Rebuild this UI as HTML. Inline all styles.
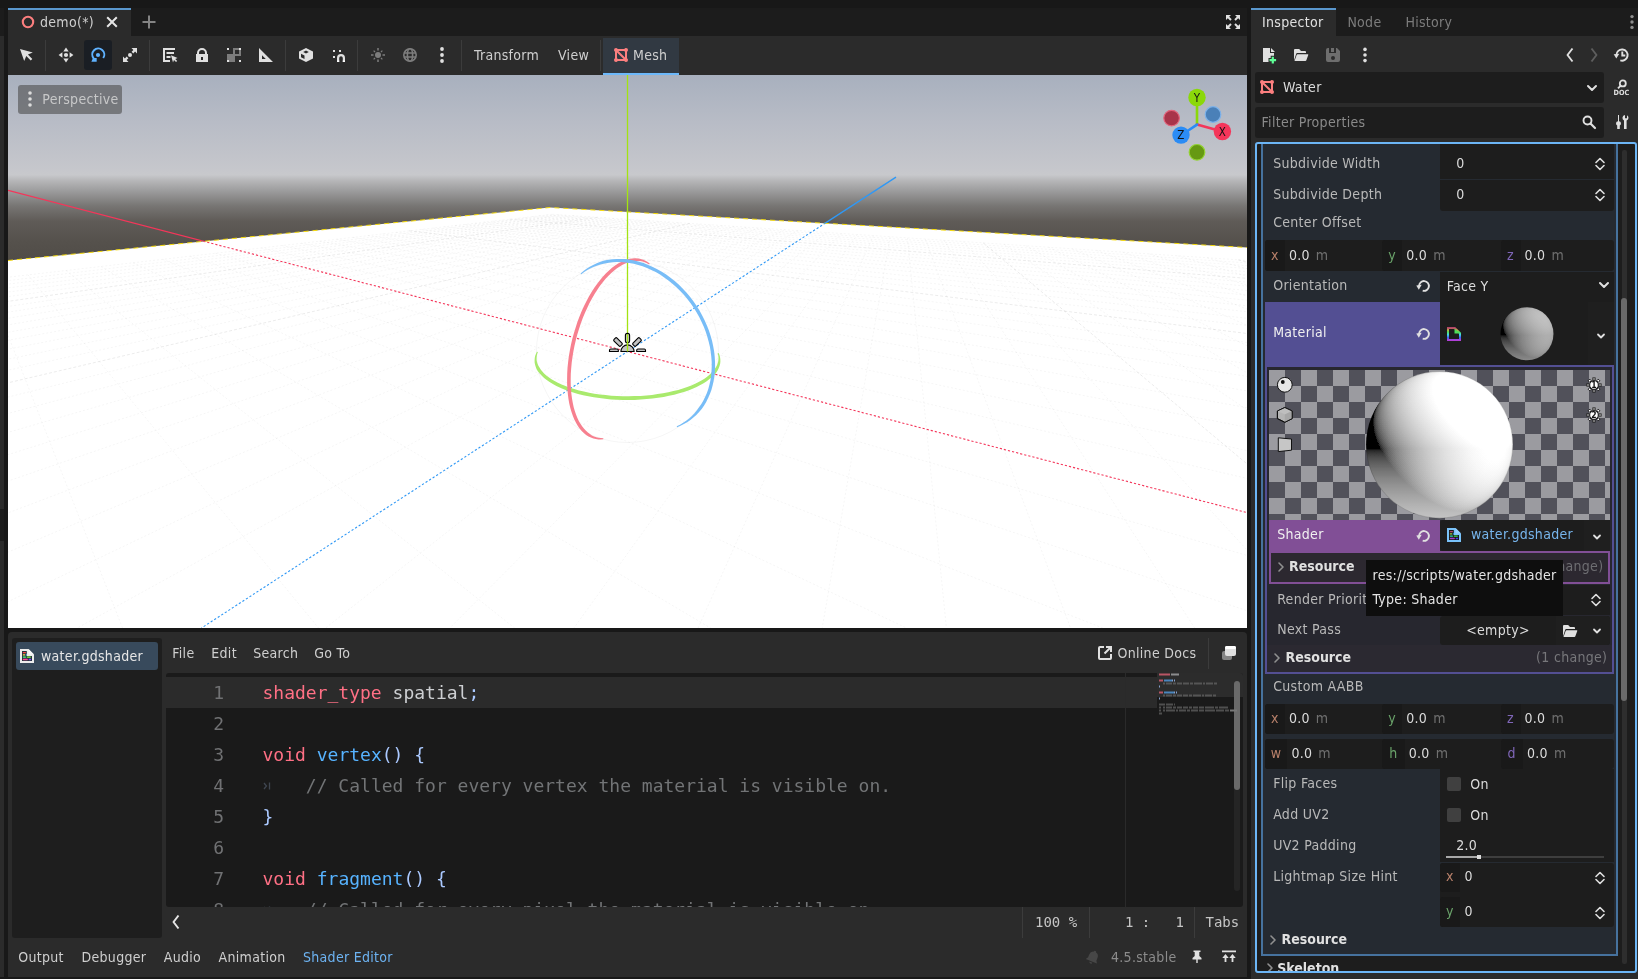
<!DOCTYPE html>
<html lang="en">
<head>
<meta charset="utf-8">
<title>Godot Editor - demo</title>
<style>
*{box-sizing:border-box;margin:0;padding:0}
html,body{width:1638px;height:979px;overflow:hidden;background:#181818}
body{position:relative;font-family:"DejaVu Sans Condensed","DejaVu Sans","Liberation Sans",sans-serif;font-size:14px;letter-spacing:.3px;color:#cdcdcd;line-height:16px}
.a{position:absolute}
.t{position:absolute;white-space:pre;line-height:16px;height:16px}
.mono{font-family:"DejaVu Sans Mono","Liberation Mono",monospace;letter-spacing:0}
svg{position:absolute;overflow:visible}
svg text{font-family:"DejaVu Sans Condensed","DejaVu Sans","Liberation Sans",sans-serif}
.sep{position:absolute;width:1px;background:#3c3c3c}
.fld{position:absolute;background:#1d1d1d}
.b{font-weight:bold;letter-spacing:0}
.ln{color:#707173;text-align:right;font-size:18px;line-height:24px;height:24px}
.cd{color:#cdcfd2;font-size:18px;line-height:24px;height:24px}
.k{color:#ff7085}.f{color:#57b3ff}.s{color:#abc9ff}.c{color:#727476}
.st{font-size:14px;color:#c6c6c6}
.lb{color:#b9b9b9}.vl{color:#dcdcdc}.un{color:#707070}
.cx{color:#b8806a}.cy{color:#6aa36a}.cz{color:#7f66b8}
.ax{position:absolute;background:#191919;border-radius:3px 0 0 3px}
.w{color:#cfcfcf}
</style>
</head>
<body>
<svg width="0" height="0" style="left:0;top:0"><defs>
<symbol id="i-rev" viewBox="0 0 16 16"><path d="M6.700 12.700A4.900 4.900 0 1 0 3.100 8" fill="none" stroke="#e0e0e0" stroke-width="1.900"/><path d="M.3 7.400l5.400-.6-2.900 4.900z" fill="#e0e0e0"/></symbol>
<symbol id="i-ud" viewBox="0 0 16 16"><path d="M4 6.500l4-4 4 4M4 9.500l4 4 4-4" fill="none" stroke="#e0e0e0" stroke-width="1.600" stroke-linecap="round" stroke-linejoin="round"/></symbol>
<symbol id="i-ch" viewBox="0 0 16 16"><path d="M4 6l4 4 4-4" fill="none" stroke="#e0e0e0" stroke-width="2" stroke-linecap="round" stroke-linejoin="round"/></symbol>
<symbol id="i-chs" viewBox="0 0 16 16"><path d="M5 6.500l3 3 3-3" fill="none" stroke="#e0e0e0" stroke-width="1.800" stroke-linecap="round" stroke-linejoin="round"/></symbol>
<symbol id="i-gt" viewBox="0 0 16 16"><path d="M6 4l4 4-4 4" fill="none" stroke="#909090" stroke-width="1.600" stroke-linecap="round" stroke-linejoin="round"/></symbol>
<symbol id="i-mesh" viewBox="0 0 16 16"><path d="M3 1a2 2 0 0 0-2 2 2 2 0 0 0 1 1.730V11.270a2 2 0 0 0-1 1.730 2 2 0 0 0 2 2 2 2 0 0 0 1.730-1h6.540a2 2 0 0 0 1.730 1 2 2 0 0 0 2-2 2 2 0 0 0-1-1.730V4.730A2 2 0 0 0 15 3a2 2 0 0 0-2-2 2 2 0 0 0-1.730 1H4.730A2 2 0 0 0 3 1zm2.414 3H11.270a2 2 0 0 0 .73.730v5.856zM4 5.414 10.586 12H4.730a2 2 0 0 0-.73-.730z" fill="#fc7f7f"/></symbol>
<symbol id="i-folder" viewBox="0 0 16 16"><path d="M2 2a1 1 0 0 0-1 1v10.500L3.300 6.600A1 1 0 0 1 4.250 6H13V5a1 1 0 0 0-1-1H8L6.700 2.400A1 1 0 0 0 6 2z" fill="#e0e0e0"/><path d="M4.600 7.200a1 1 0 0 0-.95.700L1.500 14h10.900a1 1 0 0 0 .95-.700l1.900-5.400a.5.500 0 0 0-.470-.700z" fill="#e0e0e0"/></symbol>
<symbol id="i-shader" viewBox="0 0 16 16"><path d="M1 1h8.500L15 6.500V15H1z" fill="#ececec"/><path d="M9.500 1v5.500H15z" fill="#f8f8f8"/><path d="M3 3h4.800v5h5.200v5H3z" fill="#26333f"/><g stroke-width="1.300" stroke-linecap="round" fill="none"><path d="M4.400 4.700h2" stroke="#ff4545"/><path d="M4.400 6.900h1.200" stroke="#ffe345"/><path d="M7.300 6.900h.1" stroke="#45d7ff"/><path d="M4.400 9.100h2" stroke="#45ff8a"/><path d="M8.300 9.100h3" stroke="#80ff45"/><path d="M4.400 11.500h3.800" stroke="#ff4596"/><path d="M10.300 11.500h1.200" stroke="#8045ff"/></g></symbol><symbol id="i-shaderb" viewBox="0 0 16 16"><path d="M1 1h8.500L15 6.500V15H1z" fill="#79c2fa"/><path d="M9.500 1v5.500H15z" fill="#96d0ff"/><path d="M3 3h4.800v5h5.200v5H3z" fill="#1a1a1a"/><g stroke-width="1.300" stroke-linecap="round" fill="none"><path d="M4.400 4.700h2" stroke="#b04a68"/><path d="M4.400 6.900h1.200" stroke="#a8d040"/><path d="M7.300 6.900h.1" stroke="#30b8f0"/><path d="M4.400 9.100h2" stroke="#30d8b0"/><path d="M8.300 9.100h3" stroke="#40e050"/><path d="M4.400 11.500h3.800" stroke="#a040c8"/><path d="M10.300 11.500h1.200" stroke="#4040f0"/></g></symbol>
<symbol id="i-dots" viewBox="0 0 16 16"><circle cx="8" cy="2" r="1.900"/><circle cx="8" cy="8" r="1.900"/><circle cx="8" cy="14" r="1.900"/></symbol>
<linearGradient id="gx" gradientUnits="userSpaceOnUse" x1="-51.900" y1="51.900" x2="51.900" y2="-51.900"><stop offset="0" stop-color="rgb(25,0,0)"/><stop offset="1" stop-color="rgb(230,0,0)"/></linearGradient>
<radialGradient id="gz" gradientUnits="userSpaceOnUse" cx="0" cy="0" r="73.400"><stop offset="0" stop-color="rgb(0,255,0)"/><stop offset=".2" stop-color="rgb(0,252,0)"/><stop offset=".4" stop-color="rgb(0,242,0)"/><stop offset=".5" stop-color="rgb(0,234,0)"/><stop offset=".6" stop-color="rgb(0,223,0)"/><stop offset=".7" stop-color="rgb(0,209,0)"/><stop offset=".8" stop-color="rgb(0,188,0)"/><stop offset=".85" stop-color="rgb(0,175,0)"/><stop offset=".9" stop-color="rgb(0,158,0)"/><stop offset=".94" stop-color="rgb(0,139,0)"/><stop offset=".97" stop-color="rgb(0,119,0)"/><stop offset=".99" stop-color="rgb(0,96,0)"/><stop offset="1" stop-color="rgb(0,64,0)"/></radialGradient>
<linearGradient id="gy" gradientUnits="userSpaceOnUse" x1="0" y1="4" x2="0" y2="73.400"><stop offset="0" stop-color="rgb(0,0,0)"/><stop offset="1" stop-color="rgb(0,0,205)"/></linearGradient>
<filter id="lit" color-interpolation-filters="sRGB" x="-10%" y="-10%" width="120%" height="120%"><feColorMatrix type="matrix" values="2.252 .750 0 0 -1.126  0 0 0 0 0  0 0 .7 0 0  0 0 0 1 0"/><feColorMatrix type="matrix" values="1 0 1 0 0  1 0 1 0 0  1 0 1 0 0  0 0 0 1 0"/><feComponentTransfer><feFuncR type="gamma" exponent=".4545"/><feFuncG type="gamma" exponent=".4545"/><feFuncB type="gamma" exponent=".4545"/></feComponentTransfer></filter>
<filter id="lit2" color-interpolation-filters="sRGB" x="-10%" y="-10%" width="120%" height="120%"><feColorMatrix type="matrix" values=".953 .317 0 0 -.476  0 0 0 0 0  0 0 .32 0 0  0 0 0 1 0"/><feColorMatrix type="matrix" values="1 0 1 0 0  1 0 1 0 0  1 0 1 0 0  0 0 0 1 0"/><feComponentTransfer><feFuncR type="gamma" exponent=".4545"/><feFuncG type="gamma" exponent=".4545"/><feFuncB type="gamma" exponent=".4545"/></feComponentTransfer></filter>
<clipPath id="sc"><circle r="73.400"/></clipPath>
<g id="sphg"><rect x="-75" y="-75" width="150" height="150" fill="url(#gx)"/><rect x="-75" y="-75" width="150" height="150" fill="url(#gz)" style="mix-blend-mode:screen"/><rect x="-75" y="-75" width="150" height="150" fill="url(#gy)" style="mix-blend-mode:screen"/></g>
</defs></svg>
<div class="a" style="left:0px;top:8px;width:4px;height:28px;background:#1c1c1c;"></div>
<div class="a" style="left:0px;top:36px;width:4px;height:941px;background:#2b2b2b;"></div>
<div class="a" style="left:0px;top:509px;width:4px;height:32px;background:#1c1c1c;"></div>
<div class="a" style="left:8px;top:8px;width:1239px;height:620px;background:#2b2b2b;"></div>
<div class="a" style="left:8px;top:8px;width:1239px;height:28px;background:#1c1c1c;"></div>
<div class="a" style="left:8px;top:8px;width:123px;height:28px;background:#2b2b2b;border-top:2px solid #5a97cd"></div>
<svg style="left:20px;top:14px" width="16" height="16" viewBox="0 0 16 16"><circle cx="8" cy="8" r="5.200" fill="none" stroke="#fc7f7f" stroke-width="2.100"/></svg>
<div class="t w" style="left:40px;top:13.8px;">demo(*)</div>
<svg style="left:104px;top:14px" width="16" height="16" viewBox="0 0 16 16"><path d="M3.200 3.200l9.600 9.600M12.800 3.200l-9.600 9.600" stroke="#e6e6e6" stroke-width="2" fill="none"/></svg>
<svg style="left:141px;top:14px" width="16" height="16" viewBox="0 0 16 16"><path d="M8 1.500v13M1.500 8h13" stroke="#848484" stroke-width="2" fill="none"/></svg>
<svg style="left:1225px;top:14px" width="16" height="16" viewBox="0 0 16 16"><path d="M1 1v5l1.800-1.800L5.300 6.700 6.700 5.300 4.200 2.800 6 1zM15 1h-5l1.800 1.800-2.500 2.500 1.400 1.400 2.500-2.500L15 6zM1 15h5l-1.800-1.800 2.500-2.500-1.400-1.400-2.500 2.500L1 10zM15 15v-5l-1.800 1.800-2.500-2.500-1.400 1.400 2.500 2.500L10 15z" fill="#e0e0e0"/></svg>
<div class="a" style="left:84px;top:40px;width:28px;height:30px;background:#1a1e24;border-radius:3px"></div>
<div class="sep" style="left:45px;top:40px;height:31px"></div>
<div class="sep" style="left:149px;top:40px;height:31px"></div>
<div class="sep" style="left:285px;top:40px;height:31px"></div>
<div class="sep" style="left:357px;top:40px;height:31px"></div>
<div class="sep" style="left:461px;top:40px;height:31px"></div>
<div class="sep" style="left:600px;top:40px;height:31px"></div>
<svg style="left:18px;top:47px" width="16" height="16" viewBox="0 0 16 16"><path d="M2 2l4.200 12 2.100-4.900 4.400 4.400 1.600-1.600-4.400-4.400L14.800 5.400z" fill="#e0e0e0"/></svg>
<svg style="left:58px;top:47px" width="16" height="16" viewBox="0 0 16 16"><path d="M8 .6 5.300 4.400h5.400zM8 15.400 5.300 11.600h5.400zM.6 8 4.400 5.300v5.400zM15.400 8 11.600 5.300v5.400z" fill="#e0e0e0"/><circle cx="8" cy="8" r="2.100" fill="#e0e0e0"/></svg>
<svg style="left:90px;top:47px" width="16" height="16" viewBox="0 0 16 16"><path d="M3.700 11.400A6 6 0 1 1 13.200 11" fill="none" stroke="#5fb2ff" stroke-width="2"/><path d="M1.400 14.800 3 11h3.700v3.800z" fill="#5fb2ff"/><circle cx="8" cy="8" r="2.100" fill="#5fb2ff"/></svg>
<svg style="left:122px;top:47px" width="16" height="16" viewBox="0 0 16 16"><path d="M9.500 1H15v5.500l-1.900-1.900-1.800 1.800-1.700-1.700 1.800-1.800zM6.500 15H1V9.500l1.900 1.900 1.800-1.800 1.700 1.700-1.800 1.800z" fill="#e0e0e0"/><circle cx="8" cy="8" r="2" fill="#e0e0e0"/></svg>
<svg style="left:162px;top:47px" width="16" height="16" viewBox="0 0 16 16"><path d="M1 1h12v2H3v10h5v2H1zM4.500 5h7.500v2H4.500zM4.500 9h4v2H4.500z" fill="#e0e0e0"/><path d="M9 8.300l6.600 2.600-2.400 1 2 2-1.200 1.200-2-2-1 2.400z" fill="#e0e0e0"/></svg>
<svg style="left:194px;top:47px" width="16" height="16" viewBox="0 0 16 16"><path d="M8 1a5 5 0 0 0-5 5v1H2v8h12V7h-1V6a5 5 0 0 0-5-5zm0 2a3 3 0 0 1 3 3v1H5V6a3 3 0 0 1 3-3zM7 10h2v3H7z" fill="#e0e0e0"/></svg>
<svg style="left:226px;top:47px" width="16" height="16" viewBox="0 0 16 16"><path d="M7 1v6H1v8h8V9h6V1zm2 2h4v4H9z" fill="#e0e0e0" fill-opacity=".45"/><path d="M1 1v2h2V1zm12 0v2h2V1zM1 13v2h2v-2zm12 0v2h2v-2z" fill="#e0e0e0"/></svg>
<svg style="left:258px;top:47px" width="16" height="16" viewBox="0 0 16 16"><path d="M1 1v14h14zm3 7.200L7.800 12H4z" fill="#e0e0e0" fill-rule="evenodd"/></svg>
<svg style="left:298px;top:47px" width="16" height="16" viewBox="0 0 16 16"><path d="M8 .9 1 4.400v7.200L8 15.100l7-3.500V4.400zm0 2.700L10.800 5 8 6.400 5.200 5zM3 6.700l3.500 1.750v3.500L3 10.200z" fill="#e0e0e0" fill-rule="evenodd"/></svg>
<svg style="left:330px;top:47px" width="16" height="16" viewBox="0 0 16 16"><path d="M3 3v2h2V3zm6 0v2h2V3zM3 9v2h2V9z" fill="#e0e0e0"/><path d="M7 15v-4a4 4 0 0 1 8 0v4h-2.200v-4a1.800 1.800 0 0 0-3.600 0v4z" fill="#e0e0e0"/><path d="M7 13.500h2.200V15H7zm5.800 0H15V15h-2.200z" fill="#fff"/></svg>
<svg style="left:370px;top:47px" width="16" height="16" viewBox="0 0 16 16"><g fill="#7d7d7d"><circle cx="8" cy="8" r="3"/><path d="M7.250 1h1.500v2.500h-1.500zm0 11.500h1.500V15h-1.500zM1 7.250h2.500v1.500H1zm11.500 0H15v1.500h-2.500z"/><g transform="rotate(45 8 8)"><path d="M7.400 1.800h1.200v2h-1.200zm0 10.400h1.200v2h-1.200zM1.800 7.400h2v1.200h-2zm10.400 0h2v1.200h-2z"/></g></g></svg>
<svg style="left:402px;top:47px" width="16" height="16" viewBox="0 0 16 16"><g fill="none" stroke="#7d7d7d" stroke-width="1.600"><circle cx="8" cy="8" r="6.200"/><ellipse cx="8" cy="8" rx="2.600" ry="6.200"/><path d="M2 6h12M2 10h12"/></g></svg>
<svg style="left:434px;top:47px" width="16" height="16" viewBox="0 0 16 16"><use href="#i-dots" fill="#e0e0e0"/></svg>
<div class="t w" style="left:474px;top:47px;">Transform</div>
<div class="t w" style="left:558px;top:47px;">View</div>
<div class="a" style="left:603px;top:38px;width:76px;height:37px;background:#313942;border-bottom:2px solid #6cb8fa"></div>
<svg style="left:613px;top:47px" width="16" height="16" viewBox="0 0 16 16"><use href="#i-mesh"/></svg>
<div class="t w" style="left:633px;top:47px;">Mesh</div>
<svg style="left:8px;top:75px" width="1239" height="553" viewBox="8 75 1239 553">
<defs><linearGradient id="sky" gradientUnits="userSpaceOnUse" x1="0" y1="75" x2="0" y2="265"><stop offset="0" stop-color="#a8b0be"/><stop offset=".25" stop-color="#b8bcc6"/><stop offset=".5" stop-color="#c6c7cc"/><stop offset=".525" stop-color="#c8c9cc"/><stop offset=".56" stop-color="#b4b4b6"/><stop offset=".61" stop-color="#9c9c9d"/><stop offset=".69" stop-color="#777573"/><stop offset=".77" stop-color="#5f5b57"/><stop offset=".88" stop-color="#55514c"/><stop offset="1" stop-color="#4f4b46"/></linearGradient><clipPath id="pl"><path d="M8 260.500 550 207.500 1247 247.500V628H8z"/></clipPath><clipPath id="sk"><path d="M8 75H1247V247.500L550 207.500 8 260.500z"/></clipPath></defs>
<rect x="8" y="75" width="1239" height="200" fill="url(#sky)"/>
<path d="M8 260.500 550 207.500 1247 247.500V628H8z" fill="#fff"/>
<g clip-path="url(#pl)" fill="none"><path d="M552.4 214.3L-5612.4 926.7M552.4 214.3L1461.3 274.6M559.4 214.8L-7137.6 1133.3M545.9 215L1488 279.4M566.7 215.2L-9816.8 1496.1M539.2 215.8L1517.3 284.7M574.1 215.7L-10681.8 1652.7M532.2 216.6L1549.8 290.5M581.7 216.2L-10277.3 1652.8M525 217.5L1585.8 297M589.5 216.8L-9872.8 1652.8M517.5 218.3L1626 304.2M605.7 217.8L-9063.8 1652.8M501.5 220.2L1722.7 321.6M614.1 218.4L-8659.3 1652.8M492.9 221.2L1781.3 332.1M622.7 219L-8254.8 1652.8M484.1 222.2L1849 344.3M631.5 219.5L-7850.3 1652.9M474.8 223.3L1927.9 358.4M640.6 220.2L-7445.7 1652.9M465.1 224.4L2021.2 375.2M649.9 220.8L-7041.2 1652.9M454.9 225.6L2133.2 395.3M659.4 221.4L-6636.7 1652.9M444.3 226.8L2269.9 419.9M669.3 222.1L-6232.2 1652.9M433.1 228.1L2440.9 450.6M679.3 222.7L-5827.7 1652.9M421.4 229.4L2660.6 490M700.4 224.1L-5018.7 1653M396.1 232.3L3363.3 616.3M711.4 224.9L-4614.2 1653M382.5 233.9L3977.7 726.6M722.7 225.6L-4209.7 1653M368 235.6L5000.5 910.3M734.4 226.4L-3805.2 1653M352.8 237.4L7042 1277M746.4 227.2L-3400.7 1653M336.6 239.2L8826.5 1653.5M758.7 228L-2996.2 1653.1M319.5 241.2L8187.8 1653.5M771.5 228.8L-2591.7 1653.1M301.3 243.3L7549.2 1653.5M784.7 229.7L-2187.2 1653.1M281.9 245.5L6910.5 1653.5M798.3 230.6L-1782.7 1653.1M261.2 247.9L6271.8 1653.4M826.8 232.5L-973.7 1653.1M215.4 253.2L4994.4 1653.4M841.9 233.5L-569.2 1653.2M190 256.2L4355.7 1653.4M857.4 234.5L-164.7 1653.2M162.6 259.3L3717 1653.3M873.5 235.6L239.8 1653.2M133 262.8L3078.3 1653.3M890.1 236.7L644.3 1653.2M100.9 266.5L2439.6 1653.3M907.4 237.9L1048.8 1653.2M66 270.5L1800.9 1653.3M925.3 239.1L1453.3 1653.2M28 274.9L1162.2 1653.2M943.9 240.3L1857.8 1653.3M-13.7 279.7L523.5 1653.2M963.2 241.6L2262.3 1653.3M-59.6 285L-115.2 1653.2M1004.1 244.3L3071.3 1653.3M-166.7 297.4L-1392.6 1653.1M1025.8 245.7L3475.8 1653.3M-229.7 304.7L-2031.3 1653.1M1048.5 247.2L3880.3 1653.3M-300.6 312.9L-2670 1653.1M1072.1 248.8L4284.8 1653.4M-381.1 322.2L-3308.7 1653M1096.7 250.4L4689.3 1653.4M-473 332.8L-3947.4 1653M1122.5 252.1L5093.8 1653.4M-579.2 345.1L-4586.1 1653M1149.4 253.9L5498.3 1653.4M-703.2 359.4L-5224.8 1653M1177.6 255.8L5902.8 1653.4M-849.8 376.3L-5863.5 1652.9M1207.1 257.8L6307.3 1653.4M-1025.9 396.7L-6502.1 1652.9M1270.6 262L7116.3 1653.5M-1511.2 452.8L-7779.5 1652.9M1304.8 264.2L7520.8 1653.5M-1858.8 492.9L-8418.2 1652.8M1340.8 266.6L7925.3 1653.5M-2323.3 546.6L-9056.9 1652.8M1378.8 269.2L8329.8 1653.5M-2975.9 622L-9695.6 1652.8M1418.9 271.8L8734.3 1653.5M-3959.6 735.7L-10334.3 1652.8M1461.3 274.6L9138.8 1653.6M-5612.4 926.7L-10973 1652.7" stroke="#000" stroke-opacity=".04" stroke-width="1" stroke-dasharray="2 2"/>
<path d="M597.5 217.3L-9468.3 1652.8M509.6 219.2L1671.3 312.4M689.7 223.4L-5423.2 1653M409.1 230.8L2953.5 542.6M983.2 242.9L2666.8 1653.3M-110.3 290.9L-753.9 1653.2M1238.1 259.8L6711.8 1653.5M-1241.4 421.6L-7140.8 1652.9" stroke="#000" stroke-opacity=".08" stroke-width="1" stroke-dasharray="3 2"/></g>
<path d="M8 260.500 550 207.500 1247 247.500" fill="none" stroke="#f7dc0c" stroke-width="1" stroke-dasharray="5 4"/>
<path d="M8 190.4L1247 512.6" fill="none" stroke="#f4365a" stroke-width="1.4000000000000001" clip-path="url(#sk)"/>
<path d="M8 190.4L1247 512.6" fill="none" stroke="#f4365a" stroke-width="1.1" stroke-dasharray="2.200 2" clip-path="url(#pl)"/>
<path d="M896 177.2L201.5 628" fill="none" stroke="#2f98f5" stroke-width="1.4000000000000001" clip-path="url(#sk)"/>
<path d="M896 177.2L201.5 628" fill="none" stroke="#2f98f5" stroke-width="1.1" stroke-dasharray="2.200 2" clip-path="url(#pl)"/>
<path d="M627.500 75V351.500" stroke="#a3e312" stroke-width="1.300" fill="none"/>
<circle cx="627.500" cy="351.500" r="91" fill="none" stroke="#000" stroke-opacity=".04" stroke-width="1"/>
<path d="M536.9 351.7L536 353.7L535.2 355.7L534.8 357.8L534.6 360L534.6 362.2L535 364.5L535.7 366.8L536.6 369.2L538 371.4L539.8 373.6L541.8 375.8L544.1 378L546.7 380L549.6 382.1L552.9 384L556.4 385.9L560.2 387.7L564.3 389.4L568.6 391L573.2 392.5L578 393.9L583.1 395.2L588.4 396.3L593.8 397.3L599.4 398.1L605.1 398.8L611 399.4L616.9 399.7L622.9 399.9L628.9 400L634.8 399.9L640.8 399.6L646.7 399.1L652.5 398.5L658.1 397.8L663.7 396.9L669 395.8L674.2 394.7L679.2 393.3L683.9 391.9L688.4 390.4L692.6 388.7L696.6 386.9L700.3 385.1L703.6 383.2L706.7 381.2L709.5 379.1L712 377L714.2 374.9L716.1 372.7L717.6 370.4L718.8 368.1L719.6 365.8L720.2 363.5L720.4 361.3L720.3 359.1L720 356.9L719.4 354.8L718.6 352.9L717.6 353.2L718.2 355.2L718.5 357.2L718.5 359.1L718.3 361L717.8 363L717.1 364.9L716.2 366.8L714.9 368.7L713.5 370.6L711.8 372.6L709.8 374.5L707.4 376.5L704.8 378.4L701.9 380.2L698.6 382L695.1 383.8L691.3 385.4L687.2 387L682.8 388.5L678.2 389.9L673.4 391.1L668.3 392.3L663 393.3L657.6 394.1L652 394.9L646.4 395.4L640.6 395.9L634.7 396.1L628.8 396.3L622.9 396.2L617.1 396L611.3 395.7L605.5 395.1L599.9 394.5L594.4 393.7L589.1 392.7L583.9 391.6L579 390.4L574.2 389.1L569.8 387.7L565.5 386.1L561.6 384.5L557.9 382.8L554.6 381L551.5 379.2L548.7 377.3L546.3 375.4L544.1 373.4L542.3 371.5L540.7 369.5L539.5 367.6L538.4 365.7L537.5 363.8L537 361.9L536.6 359.9L536.6 358L536.8 356L537.2 354.1L537.9 352.1z" fill="#a9ea6d"/>
<path d="M649.7 263.5L647.6 262.1L645.5 260.8L643.2 259.8L640.7 259.1L638.2 258.6L635.5 258.3L632.8 258.4L629.9 258.7L627 259.5L624.1 260.5L621.1 261.9L618.1 263.6L615.1 265.5L612 267.8L609 270.4L606 273.3L603 276.5L600.1 280L597.2 283.7L594.3 287.8L591.6 292.1L588.9 296.6L586.3 301.4L583.9 306.3L581.5 311.5L579.4 316.8L577.3 322.3L575.5 327.9L573.8 333.5L572.2 339.3L570.9 345L569.8 350.8L568.8 356.6L568.1 362.3L567.5 368L567.2 373.6L567.1 379L567.1 384.3L567.4 389.5L567.9 394.4L568.5 399.2L569.3 403.7L570.3 408.1L571.5 412.1L572.9 415.9L574.3 419.5L576 422.8L577.7 425.8L579.6 428.5L581.7 431L583.8 433.1L586.1 434.9L588.5 436.4L590.9 437.6L593.4 438.4L595.8 439L598.3 439.4L600.8 439.4L603.3 439.2L603.3 438.2L600.9 438.1L598.5 437.8L596.3 437.3L594.1 436.5L591.9 435.4L589.9 434.1L587.9 432.6L586 430.8L584.1 428.8L582.3 426.6L580.6 424L578.9 421.2L577.4 418.1L576.1 414.7L574.8 411.1L573.7 407.2L572.8 403L572 398.6L571.4 394L571 389.2L570.7 384.2L570.7 379L570.8 373.7L571.2 368.3L571.7 362.7L572.5 357.1L573.4 351.5L574.5 345.8L575.8 340.2L577.3 334.5L579 329L580.8 323.5L582.8 318.1L584.9 312.9L587.2 307.9L589.5 303L592 298.4L594.6 293.9L597.3 289.8L600 285.8L602.8 282.2L605.6 278.8L608.5 275.7L611.3 273L614.2 270.5L617 268.3L619.8 266.4L622.6 264.8L625.3 263.6L628 262.6L630.6 261.8L633.1 261.3L635.6 261L638 260.9L640.3 261.1L642.6 261.6L644.8 262.3L647 263.2L649.1 264.4z" fill="#f7808f"/>
<path d="M677.1 427.3L680.5 425.8L683.9 424.1L687.2 422.2L690.4 420L693.4 417.6L696.3 415L699.1 412.1L701.7 409L704.1 405.6L706.2 401.9L708.1 398.1L709.9 394.1L711.4 389.9L712.6 385.5L713.6 381L714.4 376.3L714.9 371.5L715.1 366.6L715 361.6L714.7 356.5L714.1 351.3L713.2 346.2L712.1 341L710.6 335.8L708.9 330.6L706.9 325.5L704.7 320.4L702.2 315.4L699.5 310.5L696.5 305.8L693.4 301.2L690 296.8L686.4 292.5L682.6 288.5L678.7 284.6L674.7 281L670.5 277.7L666.2 274.6L661.8 271.7L657.3 269.2L652.8 266.9L648.2 264.9L643.6 263.1L639.1 261.7L634.5 260.6L630 259.7L625.5 259.1L621 258.9L616.7 258.9L612.4 259.2L608.3 259.7L604.3 260.6L600.4 261.8L596.7 263.2L593.1 264.9L589.7 266.8L586.5 268.8L583.5 271.1L580.6 273.5L581.3 274.3L584.2 272.1L587.3 270.1L590.6 268.3L594 266.8L597.5 265.4L601.2 264.3L604.9 263.4L608.8 262.8L612.7 262.3L616.8 262.1L620.9 262.1L625.2 262.4L629.4 262.9L633.8 263.8L638.2 264.9L642.6 266.3L647 267.9L651.3 269.9L655.7 272.1L660 274.6L664.2 277.4L668.4 280.4L672.4 283.7L676.4 287.2L680.2 290.9L683.8 294.8L687.3 298.9L690.6 303.2L693.7 307.7L696.5 312.3L699.2 317L701.6 321.9L703.8 326.8L705.7 331.7L707.3 336.7L708.7 341.8L709.9 346.8L710.7 351.8L711.3 356.8L711.7 361.7L711.7 366.5L711.5 371.2L711.1 375.9L710.4 380.4L709.4 384.7L708.3 388.9L706.9 392.9L705.2 396.8L703.4 400.4L701.4 403.9L699.2 407.1L696.9 410.3L694.5 413.2L691.9 415.9L689.1 418.4L686.2 420.7L683.1 422.8L680 424.7L676.7 426.3z" fill="#78bdf7"/>
<g fill="#c3c3c3" stroke="#000" stroke-width="1.100"><path d="M620.900 351.500a6.600 6.600 0 0 1 13.200 0z"/><rect x="625.400" y="333.400" width="4.200" height="9.400" rx="2"/><rect x="625.400" y="333.400" width="4.200" height="9.400" rx="1.200" transform="rotate(-45 627.500 351.500)"/><rect x="625.400" y="333.400" width="4.200" height="9.400" rx="1.200" transform="rotate(45 627.500 351.500)"/><path d="M609.500 351.500v-1.300q0-1.200 1.200-1.200h6.400q1.200 0 1.200 1.200v1.300zM636.700 351.500v-1.300q0-1.200 1.200-1.200h6.400q1.200 0 1.200 1.200v1.300z"/></g>
<path d="M627.500 334V351.500" stroke="#a3e312" stroke-width="1.300" fill="none"/>
<rect x="18" y="85" width="104" height="29" rx="3" fill="#4d4d4d" fill-opacity=".6"/>
<g fill="#dcdcdc"><circle cx="30" cy="93" r="1.800"/><circle cx="30" cy="99" r="1.800"/><circle cx="30" cy="105" r="1.800"/></g>
<text x="42.300" y="104" font-size="14" letter-spacing=".3" fill="#d6d6d6" fill-opacity=".85">Perspective</text>
<g stroke-width="2.600" stroke-linecap="round"><path d="M1197 124.6L1197 105" stroke="#8bd80a"/><path d="M1197 124.6L1215 129.500" stroke="#f4365a"/><path d="M1197 124.6L1186 132" stroke="#2b8cf5"/></g>
<circle cx="1171.600" cy="118.100" r="7.800" fill="#a8344a" stroke="#e2647c" stroke-width="1.200"/>
<circle cx="1213" cy="114.500" r="7.800" fill="#4a80b8" stroke="#7db2ea" stroke-width="1.200"/>
<circle cx="1197" cy="152.300" r="7.800" fill="#669912" stroke="#93d331" stroke-width="1.200"/>
<circle cx="1197" cy="97.500" r="8.700" fill="#8bd80a"/><circle cx="1222.400" cy="131.500" r="8.700" fill="#f4365a"/><circle cx="1181" cy="135.100" r="8.700" fill="#2b8cf5"/>
<g font-size="11.500" fill="#111" text-anchor="middle"><text x="1197" y="101.700">Y</text><text x="1222.400" y="135.700">X</text><text x="1181" y="139.300">Z</text></g>
</svg>
<div class="a" style="left:8px;top:632px;width:1239px;height:345px;background:#2b2b2b;border-radius:4px 4px 0 0"></div>
<div class="a" style="left:12px;top:638px;width:150px;height:300px;background:#1e1e1e;border-radius:3px"></div>
<div class="a" style="left:16px;top:642px;width:142px;height:28px;background:#384a5c;border-radius:3px"></div>
<svg style="left:19px;top:648px" width="16" height="16" viewBox="0 0 16 16"><use href="#i-shader"/></svg>
<div class="t " style="left:41px;top:647.7px;color:#e6e6e6">water.gdshader</div>
<div class="t w" style="left:172.3px;top:645px;">File</div>
<div class="t w" style="left:211.3px;top:645px;">Edit</div>
<div class="t w" style="left:253.2px;top:645px;">Search</div>
<div class="t w" style="left:314.2px;top:645px;">Go To</div>
<svg style="left:1097px;top:645px" width="16" height="16" viewBox="0 0 16 16"><path d="M3 1a2 2 0 0 0-2 2v10a2 2 0 0 0 2 2h10a2 2 0 0 0 2-2V9h-2v4H3V3h4V1z" fill="#e0e0e0"/><path d="M9 1v2h2.586L6.793 7.793l1.414 1.414L13 4.414V7h2V1z" fill="#e0e0e0"/></svg>
<div class="t w" style="left:1117.5px;top:645px;">Online Docs</div>
<div class="sep" style="left:1208px;top:638px;height:31px"></div>
<svg style="left:1221px;top:645px" width="16" height="16" viewBox="0 0 16 16"><rect x="1" y="6" width="10" height="9" rx="2" fill="#e0e0e0" fill-opacity=".5"/><rect x="4" y="1" width="11" height="10" rx="2" fill="#e0e0e0"/><rect x="4" y="1" width="11" height="3" rx="1.500" fill="#fff"/></svg>
<div class="a" style="left:166px;top:673px;width:1077px;height:234px;background:#1a1a1a;border-radius:3px;overflow:hidden"><div class="a" style="left:0px;top:4px;width:991px;height:31px;background:#2b2b2b;"></div><div class="a" style="left:991px;top:0px;width:86px;height:24px;background:#2c2c2c;"></div><div class="a" style="left:959px;top:0px;width:1px;height:234px;background:#2a2a2a;"></div><div class="a" style="left:1068px;top:8px;width:6px;height:210px;background:#252525;border-radius:3px"></div><div class="a" style="left:1068px;top:8px;width:6px;height:109px;background:#6a6a6a;border-radius:3px"></div></div>
<div class="a" style="left:166px;top:673px;width:1077px;height:234px;overflow:hidden"><div class="a" style="left:-166px;top:-673px;width:1638px;height:979px"><div class="t mono ln" style="left:166px;width:58px;top:680.7px">1</div>
<div class="t mono cd" style="left:262.500px;top:680.7px"><span class="k">shader_type</span> spatial<span class="s">;</span></div>
<div class="t mono ln" style="left:166px;width:58px;top:711.7px">2</div>
<div class="t mono ln" style="left:166px;width:58px;top:742.7px">3</div>
<div class="t mono cd" style="left:262.500px;top:742.7px"><span class="k">void</span> <span class="f">vertex</span><span class="s">() {</span></div>
<div class="t mono ln" style="left:166px;width:58px;top:773.7px">4</div>
<div class="t mono cd" style="left:262.500px;top:773.7px">    <span class="c">// Called for every vertex the material is visible on.</span></div>
<div class="t mono ln" style="left:166px;width:58px;top:804.7px">5</div>
<div class="t mono cd" style="left:262.500px;top:804.7px"><span class="s">}</span></div>
<div class="t mono ln" style="left:166px;width:58px;top:835.7px">6</div>
<div class="t mono ln" style="left:166px;width:58px;top:866.7px">7</div>
<div class="t mono cd" style="left:262.500px;top:866.7px"><span class="k">void</span> <span class="f">fragment</span><span class="s">() {</span></div>
<div class="t mono ln" style="left:166px;width:58px;top:897.7px">8</div>
<div class="t mono cd" style="left:262.500px;top:897.7px">    <span class="c">// Called for every pixel the material is visible on.</span></div>
<svg style="left:263px;top:782.2px" width="10" height="8" viewBox="0 0 10 8"><path d="M1 1l2.500 3L1 7M6.500 .5v7" fill="none" stroke="#3f4650" stroke-width="1.300"/></svg>
<svg style="left:263px;top:906.2px" width="10" height="8" viewBox="0 0 10 8"><path d="M1 1l2.500 3L1 7M6.500 .5v7" fill="none" stroke="#3f4650" stroke-width="1.300"/></svg></div></div>
<svg style="left:0;top:0" width="1638" height="979" viewBox="0 0 1638 979"><rect x="1159" y="673.5" width="11" height="2" fill="#b85565"/><rect x="1171" y="673.5" width="8" height="2" fill="#8b8c8e"/><rect x="1159" y="679.5" width="4" height="2" fill="#b85565"/><rect x="1164" y="679.5" width="8" height="2" fill="#4a86bd"/><rect x="1172" y="679.5" width="1" height="2" fill="#86a0cc"/><rect x="1174" y="679.5" width="1" height="2" fill="#86a0cc"/><rect x="1163" y="682.5" width="2" height="2" fill="#555"/><rect x="1166" y="682.5" width="6" height="2" fill="#555"/><rect x="1173" y="682.5" width="3" height="2" fill="#555"/><rect x="1177" y="682.5" width="5" height="2" fill="#555"/><rect x="1183" y="682.5" width="6" height="2" fill="#555"/><rect x="1190" y="682.5" width="3" height="2" fill="#555"/><rect x="1194" y="682.5" width="8" height="2" fill="#555"/><rect x="1203" y="682.5" width="2" height="2" fill="#555"/><rect x="1206" y="682.5" width="7" height="2" fill="#555"/><rect x="1214" y="682.5" width="3" height="2" fill="#555"/><rect x="1159" y="685.5" width="1" height="2" fill="#86a0cc"/><rect x="1159" y="691.5" width="4" height="2" fill="#b85565"/><rect x="1164" y="691.5" width="10" height="2" fill="#4a86bd"/><rect x="1174" y="691.5" width="1" height="2" fill="#86a0cc"/><rect x="1176" y="691.5" width="1" height="2" fill="#86a0cc"/><rect x="1163" y="694.5" width="2" height="2" fill="#555"/><rect x="1166" y="694.5" width="6" height="2" fill="#555"/><rect x="1173" y="694.5" width="3" height="2" fill="#555"/><rect x="1177" y="694.5" width="5" height="2" fill="#555"/><rect x="1183" y="694.5" width="5" height="2" fill="#555"/><rect x="1189" y="694.5" width="3" height="2" fill="#555"/><rect x="1193" y="694.5" width="8" height="2" fill="#555"/><rect x="1202" y="694.5" width="2" height="2" fill="#555"/><rect x="1205" y="694.5" width="7" height="2" fill="#555"/><rect x="1213" y="694.5" width="3" height="2" fill="#555"/><rect x="1159" y="697.5" width="1" height="2" fill="#86a0cc"/><rect x="1159" y="703.5" width="6" height="2" fill="#4f4f4f"/><rect x="1166" y="703.5" width="7" height="2" fill="#4f4f4f"/><rect x="1174" y="703.5" width="1" height="2" fill="#4f4f4f"/><rect x="1159" y="706.5" width="2" height="2" fill="#4f4f4f"/><rect x="1163" y="706.5" width="2" height="2" fill="#4f4f4f"/><rect x="1166" y="706.5" width="6" height="2" fill="#4f4f4f"/><rect x="1173" y="706.5" width="3" height="2" fill="#4f4f4f"/><rect x="1177" y="706.5" width="5" height="2" fill="#4f4f4f"/><rect x="1183" y="706.5" width="5" height="2" fill="#4f4f4f"/><rect x="1189" y="706.5" width="3" height="2" fill="#4f4f4f"/><rect x="1193" y="706.5" width="5" height="2" fill="#4f4f4f"/><rect x="1199" y="706.5" width="5" height="2" fill="#4f4f4f"/><rect x="1205" y="706.5" width="9" height="2" fill="#4f4f4f"/><rect x="1215" y="706.5" width="3" height="2" fill="#4f4f4f"/><rect x="1219" y="706.5" width="9" height="2" fill="#4f4f4f"/><rect x="1159" y="709.5" width="2" height="2" fill="#4f4f4f"/><rect x="1163" y="709.5" width="2" height="2" fill="#4f4f4f"/><rect x="1166" y="709.5" width="9" height="2" fill="#4f4f4f"/><rect x="1176" y="709.5" width="2" height="2" fill="#4f4f4f"/><rect x="1179" y="709.5" width="7" height="2" fill="#4f4f4f"/><rect x="1187" y="709.5" width="3" height="2" fill="#4f4f4f"/><rect x="1191" y="709.5" width="7" height="2" fill="#4f4f4f"/><rect x="1199" y="709.5" width="5" height="2" fill="#4f4f4f"/><rect x="1205" y="709.5" width="10" height="2" fill="#4f4f4f"/><rect x="1216" y="709.5" width="8" height="2" fill="#4f4f4f"/><rect x="1225" y="709.5" width="4" height="2" fill="#4f4f4f"/><rect x="1230" y="709.5" width="7" height="2" fill="#777"/><rect x="1159" y="712.5" width="3" height="2" fill="#4f4f4f"/></svg>
<svg style="left:168px;top:914px" width="16" height="16" viewBox="0 0 16 16"><path d="M10.500 1.500L5.500 8l5 6.500" fill="none" stroke="#e6e6e6" stroke-width="2" stroke-linejoin="round"/></svg>
<div class="sep" style="left:1022px;top:907px;height:31px"></div>
<div class="sep" style="left:1089px;top:907px;height:31px"></div>
<div class="sep" style="left:1194px;top:907px;height:31px"></div>
<div class="t mono st" style="left:1035px;top:913.5px">100 %</div>
<div class="t mono st" style="left:1125px;top:913.5px">1 :   1</div>
<div class="t mono st" style="left:1205.5px;top:913.5px">Tabs</div>
<div class="t w" style="left:18.2px;top:949.2px;">Output</div>
<div class="t w" style="left:81.5px;top:949.2px;">Debugger</div>
<div class="t w" style="left:163.8px;top:949.2px;">Audio</div>
<div class="t w" style="left:218.6px;top:949.2px;">Animation</div>
<div class="t " style="left:303px;top:949.2px;color:#6db3f2">Shader Editor</div>
<svg style="left:1085px;top:949px" width="16" height="16" viewBox="0 0 16 16"><g transform="rotate(22 8 8)"><path d="M8 1.500a1.200 1.200 0 0 0-1.200 1.200A4.500 4.500 0 0 0 3.500 7v3l-1.500 2.500h12L12.500 10V7a4.500 4.500 0 0 0-3.300-4.300A1.200 1.200 0 0 0 8 1.500zM6.500 13.500a1.500 1.500 0 0 0 3 0z" fill="#474747"/></g></svg>
<div class="t " style="left:1111px;top:948.8px;color:#8c8c8c">4.5.stable</div>
<svg style="left:1189px;top:949px" width="16" height="16" viewBox="0 0 16 16"><path d="M4.500 1.500h7v1.500h-1.200v4l2.200 2v1.500h-9V9l2.200-2V3H4.500zM7.300 10.500h1.400v3.500H7.300z" fill="#e0e0e0"/></svg>
<svg style="left:1221px;top:949px" width="16" height="16" viewBox="0 0 16 16"><path d="M1 1.500h14v1.700H1zM4.500 5 1.300 9H3.600v4h1.800V9h2.300zM11.500 5 8.300 9h2.300v4h1.800V9h2.300z" fill="#e0e0e0"/></svg>
<div class="a" style="left:1251px;top:8px;width:387px;height:971px;background:#2b2b2b;"></div>
<div class="a" style="left:1336px;top:8px;width:302px;height:28px;background:#1c1c1c;"></div>
<div class="a" style="left:1251px;top:8px;width:85px;height:2px;background:#5a97cd;"></div>
<div class="t " style="left:1262px;top:14.2px;color:#e0e0e0">Inspector</div>
<div class="t " style="left:1347.4px;top:14.2px;color:#7c7c7c">Node</div>
<div class="t " style="left:1405.4px;top:14.2px;color:#7c7c7c">History</div>
<svg style="left:1624px;top:14px" width="16" height="16" viewBox="0 0 16 16"><g fill="#8d8d8d"><circle cx="8" cy="2.600" r="1.700"/><circle cx="8" cy="8" r="1.700"/><circle cx="8" cy="13.400" r="1.700"/></g></svg>
<svg style="left:1261px;top:47px" width="16" height="16" viewBox="0 0 16 16"><path d="M2 1v14h5.500v-4h2.200V8.800H13V6H9V1zm8 0v4h4z" fill="#e0e0e0"/><path d="M10.700 9.800v2.200H8.500v2.200h2.200v2.200h2.200v-2.200h2.200v-2.200h-2.200V9.800z" fill="#5fff97"/></svg>
<svg style="left:1293px;top:47px" width="16" height="16" viewBox="0 0 16 16"><use href="#i-folder"/></svg>
<svg style="left:1325px;top:47px" width="16" height="16" viewBox="0 0 16 16"><path d="M3 1a2 2 0 0 0-2 2v10a2 2 0 0 0 2 2h10a2 2 0 0 0 2-2V4l-3-3h-1v5H4V1zm3 0v4h3V1zm2 8a2 2 0 0 1 0 4 2 2 0 0 1 0-4z" fill="#6e6e6e"/></svg>
<svg style="left:1357px;top:47px" width="16" height="16" viewBox="0 0 16 16"><g fill="#e0e0e0"><circle cx="8" cy="2.400" r="1.800"/><circle cx="8" cy="8" r="1.800"/><circle cx="8" cy="13.600" r="1.800"/></g></svg>
<svg style="left:1562px;top:47px" width="16" height="16" viewBox="0 0 16 16"><path d="M10.500 1.500L5.500 8l5 6.500" fill="none" stroke="#e0e0e0" stroke-width="1.900" stroke-linejoin="round"/></svg>
<svg style="left:1586px;top:47px" width="16" height="16" viewBox="0 0 16 16"><path d="M5.500 1.500L10.500 8l-5 6.500" fill="none" stroke="#5e5e5e" stroke-width="1.900" stroke-linejoin="round"/></svg>
<svg style="left:1614px;top:47px" width="16" height="16" viewBox="0 0 16 16"><path d="M6.300 13.400A5.600 5.600 0 1 0 2.400 8" fill="none" stroke="#e0e0e0" stroke-width="1.900"/><path d="M-.3 7.200l5.600-.4-3 4.800z" fill="#e0e0e0"/><path d="M8.300 4.600V8.500h3" fill="none" stroke="#e0e0e0" stroke-width="1.900"/></svg>
<div class="a" style="left:1255px;top:72px;width:349px;height:30.5px;background:#1d1d1d;border-radius:3px"></div>
<svg style="left:1258.8px;top:79.3px" width="16" height="16" viewBox="0 0 16 16"><use href="#i-mesh"/></svg>
<div class="t " style="left:1283px;top:78.9px;color:#dcdcdc">Water</div>
<svg style="left:1583.7px;top:79.5px" width="16" height="16" viewBox="0 0 16 16"><use href="#i-ch"/></svg>
<svg style="left:1614px;top:79px" width="16" height="16" viewBox="0 0 16 16"><circle cx="8.800" cy="4.400" r="3" fill="none" stroke="#e0e0e0" stroke-width="1.800"/><path d="M6.700 6.600L4 9.300" stroke="#e0e0e0" stroke-width="1.900" fill="none"/><text x="7.400" y="16.200" font-size="7.200" font-weight="bold" fill="#e0e0e0" text-anchor="middle" letter-spacing="0">DOC</text></svg>
<div class="a" style="left:1255px;top:107px;width:349px;height:30.5px;background:#1d1d1d;border-radius:3px"></div>
<div class="t " style="left:1261.6px;top:113.8px;color:#8a8a8a">Filter Properties</div>
<svg style="left:1581px;top:114px" width="16" height="16" viewBox="0 0 16 16"><circle cx="6.500" cy="6.500" r="4" fill="none" stroke="#e0e0e0" stroke-width="1.900"/><path d="M9.500 9.500l4.500 4.500" stroke="#e0e0e0" stroke-width="2.200" stroke-linecap="round"/></svg>
<svg style="left:1614px;top:114px" width="16" height="16" viewBox="0 0 16 16"><path d="M4 1v6.200a2.300 2.300 0 0 0-.8 4.300V15h2.600v-3.500a2.300 2.300 0 0 0-.8-4.300V1zM11 1a3 3 0 0 0-1 5.600V15h2.600V6.600A3 3 0 0 0 13 1.200V4.300h-2z" fill="#e0e0e0"/></svg>
<div class="a" style="left:1255px;top:142px;width:382px;height:831px;background:#1d1d1d;border:2px solid #6cb5f5;border-radius:3px"></div>
<div class="a" style="left:1261px;top:144px;width:357px;height:812px;background:#252a31;border:2px solid #46729e;border-top:none"></div>
<div class="a" style="left:1622px;top:150px;width:4.5px;height:814px;background:#2e2e2e;border-radius:2px"></div>
<div class="a" style="left:1621px;top:298px;width:6px;height:403px;background:#6a6a6a;border-radius:3px"></div>
<div class="a" style="left:1440.3px;top:144px;width:173.4px;height:4.3px;background:#1d1d1d;"></div>
<div class="a" style="left:1440.3px;top:148.3px;width:173.4px;height:30.8px;background:#1d1d1d;"></div>
<div class="a" style="left:1440.3px;top:179.8px;width:173.4px;height:30.8px;background:#1d1d1d;border-radius:0 0 3px 3px"></div>
<div class="t lb" style="left:1273.2px;top:155px;">Subdivide Width</div>
<div class="t vl" style="left:1456.2px;top:155px;">0</div>
<svg style="left:1592px;top:156px" width="16" height="16" viewBox="0 0 16 16"><use href="#i-ud"/></svg>
<div class="t lb" style="left:1273.2px;top:186px;">Subdivide Depth</div>
<div class="t vl" style="left:1456.2px;top:186px;">0</div>
<svg style="left:1592px;top:187px" width="16" height="16" viewBox="0 0 16 16"><use href="#i-ud"/></svg>
<div class="t lb" style="left:1273.2px;top:213.5px;">Center Offset</div>
<div class="a" style="left:1264.9px;top:240.2px;width:348.8px;height:30.6px;background:#1d1d1d;border-radius:3px"></div><div class="ax" style="left:1264.9px;top:240.2px;width:20px;height:30.6px"></div><div class="t cx" style="left:1264.9px;width:20px;text-align:center;top:246.5px;">x</div><div class="t vl" style="left:1288.9px;top:246.5px;">0.0<span class="un" style="margin-left:6px">m</span></div><div class="ax" style="left:1382.2px;top:240.2px;width:20px;height:30.6px"></div><div class="t cy" style="left:1382.2px;width:20px;text-align:center;top:246.5px;">y</div><div class="t vl" style="left:1406.2px;top:246.5px;">0.0<span class="un" style="margin-left:6px">m</span></div><div class="ax" style="left:1500.5px;top:240.2px;width:20px;height:30.6px"></div><div class="t cz" style="left:1500.5px;width:20px;text-align:center;top:246.5px;">z</div><div class="t vl" style="left:1524.5px;top:246.5px;">0.0<span class="un" style="margin-left:6px">m</span></div>
<div class="t lb" style="left:1273.2px;top:276.8px;">Orientation</div>
<svg style="left:1415.5px;top:278.4px" width="16" height="16" viewBox="0 0 16 16"><use href="#i-rev"/></svg>
<div class="a" style="left:1440.3px;top:271.5px;width:173.4px;height:30.3px;background:#1d1d1d;"></div>
<div class="t vl" style="left:1446.7px;top:277.5px;">Face Y</div>
<svg style="left:1595.8px;top:277.3px" width="16" height="16" viewBox="0 0 16 16"><use href="#i-ch"/></svg>
<div class="a" style="left:1264.9px;top:302.3px;width:175.4px;height:63px;background:#534f93;"></div>
<div class="t " style="left:1273.2px;top:323.7px;color:#f0f0f0">Material</div>
<svg style="left:1415.5px;top:326.3px" width="16" height="16" viewBox="0 0 16 16"><use href="#i-rev"/></svg>
<div class="a" style="left:1440.3px;top:302.3px;width:173.4px;height:63px;background:#1d1d1d;border-radius:0 3px 0 0"></div>
<div class="a" style="left:1587.7px;top:302.3px;width:26px;height:63px;background:#1f1f1f;"></div>
<svg style="left:1446px;top:326px" width="16" height="16" viewBox="0 0 16 16"><defs><linearGradient id="rb" x1="0" y1="0" x2="0" y2="1"><stop offset="0" stop-color="#b34468"/><stop offset=".16" stop-color="#c8a850"/><stop offset=".32" stop-color="#58e050"/><stop offset=".56" stop-color="#40d8e8"/><stop offset=".8" stop-color="#4060f0"/><stop offset="1" stop-color="#b040d8"/></linearGradient></defs><path d="M2 2h6.800L14 7.200V14H2z" fill="none" stroke="url(#rb)" stroke-width="2"/><path d="M8.500 2.500v5H13.500z" fill="#4ce058"/></svg>
<svg style="left:1499.5px;top:307px" width="54" height="54" viewBox="0 0 54 54"><g transform="translate(27 26.800) scale(.361)"><g clip-path="url(#sc)"><use href="#sphg" filter="url(#lit2)"/></g></g></svg>
<svg style="left:1592.7px;top:327.5px" width="16" height="16" viewBox="0 0 16 16"><use href="#i-chs"/></svg>
<div class="a" style="left:1264.9px;top:365px;width:348.8px;height:309px;background:#27272f;border:2px solid #534f93"></div>
<svg style="left:1269px;top:370px" width="341" height="150" viewBox="0 0 341 150"><defs><pattern id="chk" width="32" height="32" patternUnits="userSpaceOnUse"><rect width="32" height="32" fill="#9b9ba0"/><rect x="16" width="16" height="16" fill="#51515a"/><rect y="16" width="16" height="16" fill="#51515a"/></pattern></defs><rect width="341" height="150" fill="url(#chk)"/><g transform="translate(170.500 74.800)"><g clip-path="url(#sc)"><use href="#sphg" filter="url(#lit)"/></g><circle r="73.200" fill="none" stroke="#000" stroke-opacity=".18" stroke-width=".8"/></g></svg>
<svg style="left:1277px;top:377px" width="16" height="16" viewBox="0 0 16 16"><circle cx="7.800" cy="7.800" r="7.400" fill="#e6e6e6" stroke="#111" stroke-width="1"/><circle cx="5.800" cy="5" r="1.900" fill="#111"/></svg>
<svg style="left:1277px;top:407px" width="16" height="16" viewBox="0 0 16 16"><path d="M7.800 .5 15.200 4v7.600L7.800 15.300.4 11.600V4z" fill="#b4b4b4" stroke="#111" stroke-width="1" stroke-linejoin="round"/><path d="M7.800 .5 15.200 4 7.800 7.600.4 4z" fill="#bebebe"/><path d="M7.800 7.600 15.200 4v7.600L7.800 15.300z" fill="#a6a6a6"/><path d="M7.800 .5 15.200 4v7.600L7.800 15.300.4 11.600V4z" fill="none" stroke="#111" stroke-width="1" stroke-linejoin="round"/></svg>
<svg style="left:1277px;top:437px" width="16" height="16" viewBox="0 0 16 16"><path d="M1.300 .8 14.500 2V13.200L1.300 14.600z" fill="#c6c6c6" stroke="#111" stroke-width="1" stroke-linejoin="round"/></svg>
<svg style="left:1586px;top:377px" width="16" height="16" viewBox="0 0 16 16"><g fill="#fff" stroke="#111" stroke-width=".9"><circle cx="8" cy="8" r="4.300"/><rect x="6.9" y="0.9" width="2.200" height="2.200" transform="rotate(0 8 8)"/><rect x="6.9" y="0.9" width="2.200" height="2.200" transform="rotate(45 8 8)"/><rect x="6.9" y="0.9" width="2.200" height="2.200" transform="rotate(90 8 8)"/><rect x="6.9" y="0.9" width="2.200" height="2.200" transform="rotate(135 8 8)"/><rect x="6.9" y="0.9" width="2.200" height="2.200" transform="rotate(180 8 8)"/><rect x="6.9" y="0.9" width="2.200" height="2.200" transform="rotate(225 8 8)"/><rect x="6.9" y="0.9" width="2.200" height="2.200" transform="rotate(270 8 8)"/><rect x="6.9" y="0.9" width="2.200" height="2.200" transform="rotate(315 8 8)"/></g><text x="8" y="11" font-size="8.500" font-weight="bold" fill="#111" text-anchor="middle" letter-spacing="0">1</text></svg>
<svg style="left:1586px;top:407px" width="16" height="16" viewBox="0 0 16 16"><g fill="#fff" stroke="#111" stroke-width=".9"><circle cx="8" cy="8" r="4.300"/><rect x="6.9" y="0.9" width="2.200" height="2.200" transform="rotate(0 8 8)"/><rect x="6.9" y="0.9" width="2.200" height="2.200" transform="rotate(45 8 8)"/><rect x="6.9" y="0.9" width="2.200" height="2.200" transform="rotate(90 8 8)"/><rect x="6.9" y="0.9" width="2.200" height="2.200" transform="rotate(135 8 8)"/><rect x="6.9" y="0.9" width="2.200" height="2.200" transform="rotate(180 8 8)"/><rect x="6.9" y="0.9" width="2.200" height="2.200" transform="rotate(225 8 8)"/><rect x="6.9" y="0.9" width="2.200" height="2.200" transform="rotate(270 8 8)"/><rect x="6.9" y="0.9" width="2.200" height="2.200" transform="rotate(315 8 8)"/></g><text x="8" y="11" font-size="8.500" font-weight="bold" fill="#111" text-anchor="middle" letter-spacing="0">2</text></svg>
<div class="a" style="left:1269.4px;top:520.4px;width:170.9px;height:30.3px;background:#814f96;"></div>
<div class="t " style="left:1277.2px;top:525.9px;color:#f0f0f0">Shader</div>
<svg style="left:1415.5px;top:527.8px" width="16" height="16" viewBox="0 0 16 16"><use href="#i-rev"/></svg>
<div class="a" style="left:1440.3px;top:520.4px;width:169.7px;height:30.3px;background:#1d1d1d;border-radius:3px"></div>
<div class="a" style="left:1584px;top:520.4px;width:26px;height:30.3px;background:#1f1f1f;"></div>
<svg style="left:1446px;top:527px" width="16" height="16" viewBox="0 0 16 16"><use href="#i-shaderb"/></svg>
<div class="t " style="left:1471px;top:526.4px;color:#77b5ec">water.gdshader</div>
<svg style="left:1589px;top:528.5px" width="16" height="16" viewBox="0 0 16 16"><use href="#i-chs"/></svg>
<div class="a" style="left:1269.4px;top:550.7px;width:340.6px;height:33px;background:#2c2830;border:2px solid #814f96"></div>
<svg style="left:1272.8px;top:558.5px" width="16" height="16" viewBox="0 0 16 16"><use href="#i-gt"/></svg>
<div class="t b" style="left:1289px;top:557.8px;color:#e0e0e0">Resource</div>
<div class="t " style="left:1499.4px;width:104px;text-align:right;top:557.8px;color:#6e6e72">(1 change)</div>
<div class="t lb" style="left:1277.2px;top:590.5px;">Render Priority</div>
<div class="a" style="left:1440.3px;top:584.5px;width:169.7px;height:30.3px;background:#1d1d1d;"></div>
<div class="t vl" style="left:1456.2px;top:590.5px;">0</div>
<svg style="left:1588px;top:591.5px" width="16" height="16" viewBox="0 0 16 16"><use href="#i-ud"/></svg>
<div class="t lb" style="left:1277.2px;top:621px;">Next Pass</div>
<div class="a" style="left:1440.3px;top:615.8px;width:169.7px;height:29.6px;background:#1d1d1d;border-radius:3px"></div>
<div class="a" style="left:1555.7px;top:615.8px;width:28.3px;height:29.6px;background:#1f1f1f;"></div>
<div class="a" style="left:1584px;top:615.8px;width:26px;height:29.6px;background:#1f1f1f;border-radius:0 3px 3px 0"></div>
<div class="t vl" style="left:1440.3px;width:115.4px;text-align:center;top:621.7px;">&lt;empty&gt;</div>
<svg style="left:1562px;top:622.5px" width="16" height="16" viewBox="0 0 16 16"><use href="#i-folder"/></svg>
<svg style="left:1589px;top:623px" width="16" height="16" viewBox="0 0 16 16"><use href="#i-chs"/></svg>
<div class="a" style="left:1266.9px;top:645.4px;width:344.8px;height:26.6px;background:#2b2931;"></div>
<svg style="left:1269.2px;top:649.8px" width="16" height="16" viewBox="0 0 16 16"><use href="#i-gt"/></svg>
<div class="t b" style="left:1285.5px;top:649px;color:#e0e0e0">Resource</div>
<div class="t " style="left:1499.3px;width:108px;text-align:right;top:649px;color:#77777b">(1 change)</div>
<div class="a" style="left:1366px;top:559.5px;width:197px;height:56.3px;background:#0e0e0e;"></div>
<div class="t " style="left:1372.5px;top:567.3px;color:#e4e4e4">res://scripts/water.gdshader</div>
<div class="t " style="left:1372.5px;top:591.4px;color:#e4e4e4">Type: Shader</div>
<div class="t lb" style="left:1273.2px;top:678px;">Custom AABB</div>
<div class="a" style="left:1264.9px;top:704.2px;width:348.8px;height:30.1px;background:#1d1d1d;border-radius:3px"></div><div class="ax" style="left:1264.9px;top:704.2px;width:20px;height:30.1px"></div><div class="t cx" style="left:1264.9px;width:20px;text-align:center;top:710px;">x</div><div class="t vl" style="left:1288.9px;top:710px;">0.0<span class="un" style="margin-left:6px">m</span></div><div class="ax" style="left:1382.2px;top:704.2px;width:20px;height:30.1px"></div><div class="t cy" style="left:1382.2px;width:20px;text-align:center;top:710px;">y</div><div class="t vl" style="left:1406.2px;top:710px;">0.0<span class="un" style="margin-left:6px">m</span></div><div class="ax" style="left:1500.5px;top:704.2px;width:20px;height:30.1px"></div><div class="t cz" style="left:1500.5px;width:20px;text-align:center;top:710px;">z</div><div class="t vl" style="left:1524.5px;top:710px;">0.0<span class="un" style="margin-left:6px">m</span></div>
<div class="a" style="left:1264.9px;top:738.6px;width:348.8px;height:30.1px;background:#1d1d1d;border-radius:3px"></div><div class="ax" style="left:1264.9px;top:738.6px;width:22.5px;height:30.1px"></div><div class="t cx" style="left:1264.9px;width:22.5px;text-align:center;top:744.5px;">w</div><div class="t vl" style="left:1291.4px;top:744.5px;">0.0<span class="un" style="margin-left:6px">m</span></div><div class="ax" style="left:1382.2px;top:738.6px;width:22.5px;height:30.1px"></div><div class="t cy" style="left:1382.2px;width:22.5px;text-align:center;top:744.5px;">h</div><div class="t vl" style="left:1408.7px;top:744.5px;">0.0<span class="un" style="margin-left:6px">m</span></div><div class="ax" style="left:1500.5px;top:738.6px;width:22.5px;height:30.1px"></div><div class="t cz" style="left:1500.5px;width:22.5px;text-align:center;top:744.5px;">d</div><div class="t vl" style="left:1527px;top:744.5px;">0.0<span class="un" style="margin-left:6px">m</span></div>
<div class="a" style="left:1440.3px;top:768.7px;width:173.4px;height:30.6px;background:#1d1d1d;"></div>
<div class="t lb" style="left:1273.2px;top:774.9px;">Flip Faces</div>
<div class="a" style="left:1447px;top:777px;width:14px;height:14px;background:#404040;border-radius:2px"></div>
<div class="t vl" style="left:1470.3px;top:775.6px;">On</div>
<div class="a" style="left:1440.3px;top:799.3px;width:173.4px;height:30.6px;background:#1d1d1d;"></div>
<div class="t lb" style="left:1273.2px;top:806.2px;">Add UV2</div>
<div class="a" style="left:1447px;top:808px;width:14px;height:14px;background:#404040;border-radius:2px"></div>
<div class="t vl" style="left:1470.3px;top:806.6px;">On</div>
<div class="a" style="left:1440.3px;top:830px;width:173.4px;height:31.5px;background:#1d1d1d;"></div>
<div class="t lb" style="left:1273.2px;top:836.5px;">UV2 Padding</div>
<div class="t vl" style="left:1456.2px;top:836.5px;">2.0</div>
<div class="a" style="left:1446px;top:856px;width:158px;height:2px;background:#3e3e3e;"></div>
<div class="a" style="left:1446px;top:856px;width:33px;height:2px;background:#a8a8a8;"></div>
<div class="a" style="left:1477px;top:855px;width:4px;height:4px;background:#dcdcdc;"></div>
<div class="t lb" style="left:1273.2px;top:867.5px;">Lightmap Size Hint</div>
<div class="a" style="left:1440.3px;top:862.5px;width:173.4px;height:29.6px;background:#1d1d1d;border-radius:3px 3px 0 0"></div>
<div class="a" style="left:1440.3px;top:892px;width:173.4px;height:5.3px;background:#1d1d1d;"></div>
<div class="a" style="left:1440.3px;top:897.3px;width:173.4px;height:29.9px;background:#1d1d1d;border-radius:0 0 3px 3px"></div>
<div class="ax" style="left:1440.300px;top:862.500px;width:19.400px;height:29.600px"></div><div class="ax" style="left:1440.300px;top:897.300px;width:19.400px;height:29.900px"></div>
<div class="t cx" style="left:1440.3px;width:19.4px;text-align:center;top:867.5px;">x</div>
<div class="t cy" style="left:1440.3px;width:19.4px;text-align:center;top:902.5px;">y</div>
<div class="t vl" style="left:1464.4px;top:867.5px;">0</div>
<div class="t vl" style="left:1464.4px;top:902.5px;">0</div>
<svg style="left:1592px;top:869.5px" width="16" height="16" viewBox="0 0 16 16"><use href="#i-ud"/></svg>
<svg style="left:1592px;top:904.5px" width="16" height="16" viewBox="0 0 16 16"><use href="#i-ud"/></svg>
<svg style="left:1265.2px;top:932px" width="16" height="16" viewBox="0 0 16 16"><use href="#i-gt"/></svg>
<div class="t b" style="left:1281.5px;top:931.2px;color:#e0e0e0">Resource</div>
<div class="a" style="left:1257px;top:957.500px;width:362px;height:13.500px;overflow:hidden"><svg style="left:4.7px;top:2.5px" width="16" height="16" viewBox="0 0 16 16"><use href="#i-gt"/></svg><div class="t b" style="left:20.200px;top:2px;color:#e0e0e0">Skeleton</div></div>

</body>
</html>
